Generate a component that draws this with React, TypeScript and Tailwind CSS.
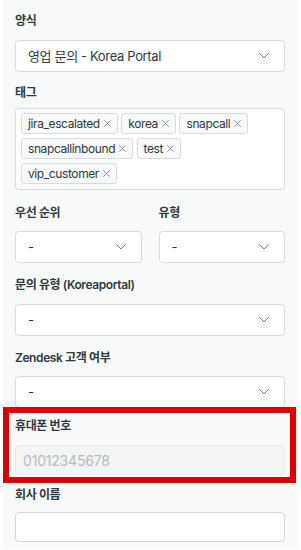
import React from "react";

const font = { fontFamily: '"Inter", "Noto Sans CJK KR", sans-serif' };

function Chevron() {
  return (
    <svg width="10" height="6" viewBox="0 0 10 6" fill="none" className="shrink-0">
      <path d="M0.6 0.6 L5 4.9 L9.4 0.6" stroke="#68737d" strokeWidth="1" strokeLinecap="round" strokeLinejoin="round" />
    </svg>
  );
}

function Label({ children, className = "" }: { children: React.ReactNode; className?: string }) {
  return (
    <div className={"h-5 leading-5 text-[12px] tracking-[-0.4px] font-semibold text-[#2f3941] " + className}>{children}</div>
  );
}

function Select({ value, className = "" }: { value: string; className?: string }) {
  return (
    <div
      className={
        "h-8 flex items-center justify-between rounded-[4px] border border-[#d8dcde] bg-white pl-[12px] pr-[15px] " +
        className
      }
    >
      <span className="text-[13px] tracking-[-0.35px] text-[#2f3941] leading-5">{value}</span>
      <Chevron />
    </div>
  );
}

function Tag({ name }: { name: string }) {
  return (
    <div className="h-[21px] flex items-center rounded-[3px] border border-[#d8dcde] bg-[#f8f9f9] pl-[6px] pr-[6px] gap-[4px]">
      <span className="text-[12px] tracking-[-0.4px] text-[#2f3941] leading-4">{name}</span>
      <svg width="7" height="7" viewBox="0 0 7 7" fill="none">
        <path d="M0.6 0.6 L6.4 6.4 M6.4 0.6 L0.6 6.4" stroke="#87929d" strokeWidth="1" strokeLinecap="round" />
      </svg>
    </div>
  );
}

export default function App() {
  return (
    <div className="bg-white w-[301px] h-[550px]" style={font}>
      <div className="relative ml-[3px] w-[294px] h-[549px] bg-[#f8f9f9] px-[12px] pt-[11px]">
        <Label>양식</Label>
        <Select value="영업 문의 - Korea Portal" className="mt-[9px]" />

        <Label className="mt-[10.5px]">태그</Label>
        <div className="mt-[5.5px] h-[82px] rounded-[4px] border border-[#d8dcde] bg-white px-[5px] pt-[4px]">
          <div className="flex flex-wrap gap-x-[3.5px] gap-y-[4px]">
            <Tag name="jira_escalated" />
            <Tag name="korea" />
            <Tag name="snapcall" />
            <Tag name="snapcallinbound" />
            <Tag name="test" />
            <Tag name="vip_customer" />
          </div>
        </div>

        <div className="mt-[12.5px] grid grid-cols-2 gap-x-[17px]">
          <div>
            <Label>우선 순위</Label>
            <Select value="-" className="mt-[8.5px]" />
          </div>
          <div>
            <Label>유형</Label>
            <Select value="-" className="mt-[8.5px]" />
          </div>
        </div>

        <Label className="mt-[12px]">문의 유형 (Koreaportal)</Label>
        <Select value="-" className="mt-[9px]" />

        <Label className="mt-[12px]">Zendesk 고객 여부</Label>
        <Select value="-" className="mt-[8px]" />

        <Label className="mt-[8px]">휴대폰 번호</Label>
        <div className="mt-[9px] h-[30px] flex items-center rounded-[4px] border border-[#e9ebed] bg-[#f3f4f4] px-[7px]">
          <span className="text-[14px] tracking-[-0.2px] text-[#b5bcc2]">01012345678</span>
        </div>

        <Label className="mt-[10px]">회사 이름</Label>
        <div className="mt-[7px] h-[30px] rounded-[4px] border border-[#d0d5d8] bg-white" />

        <div className="absolute left-0 top-[407px] w-[293px] h-[76px] border-[6px] border-[#e00000] pointer-events-none" />
      </div>
    </div>
  );
}
